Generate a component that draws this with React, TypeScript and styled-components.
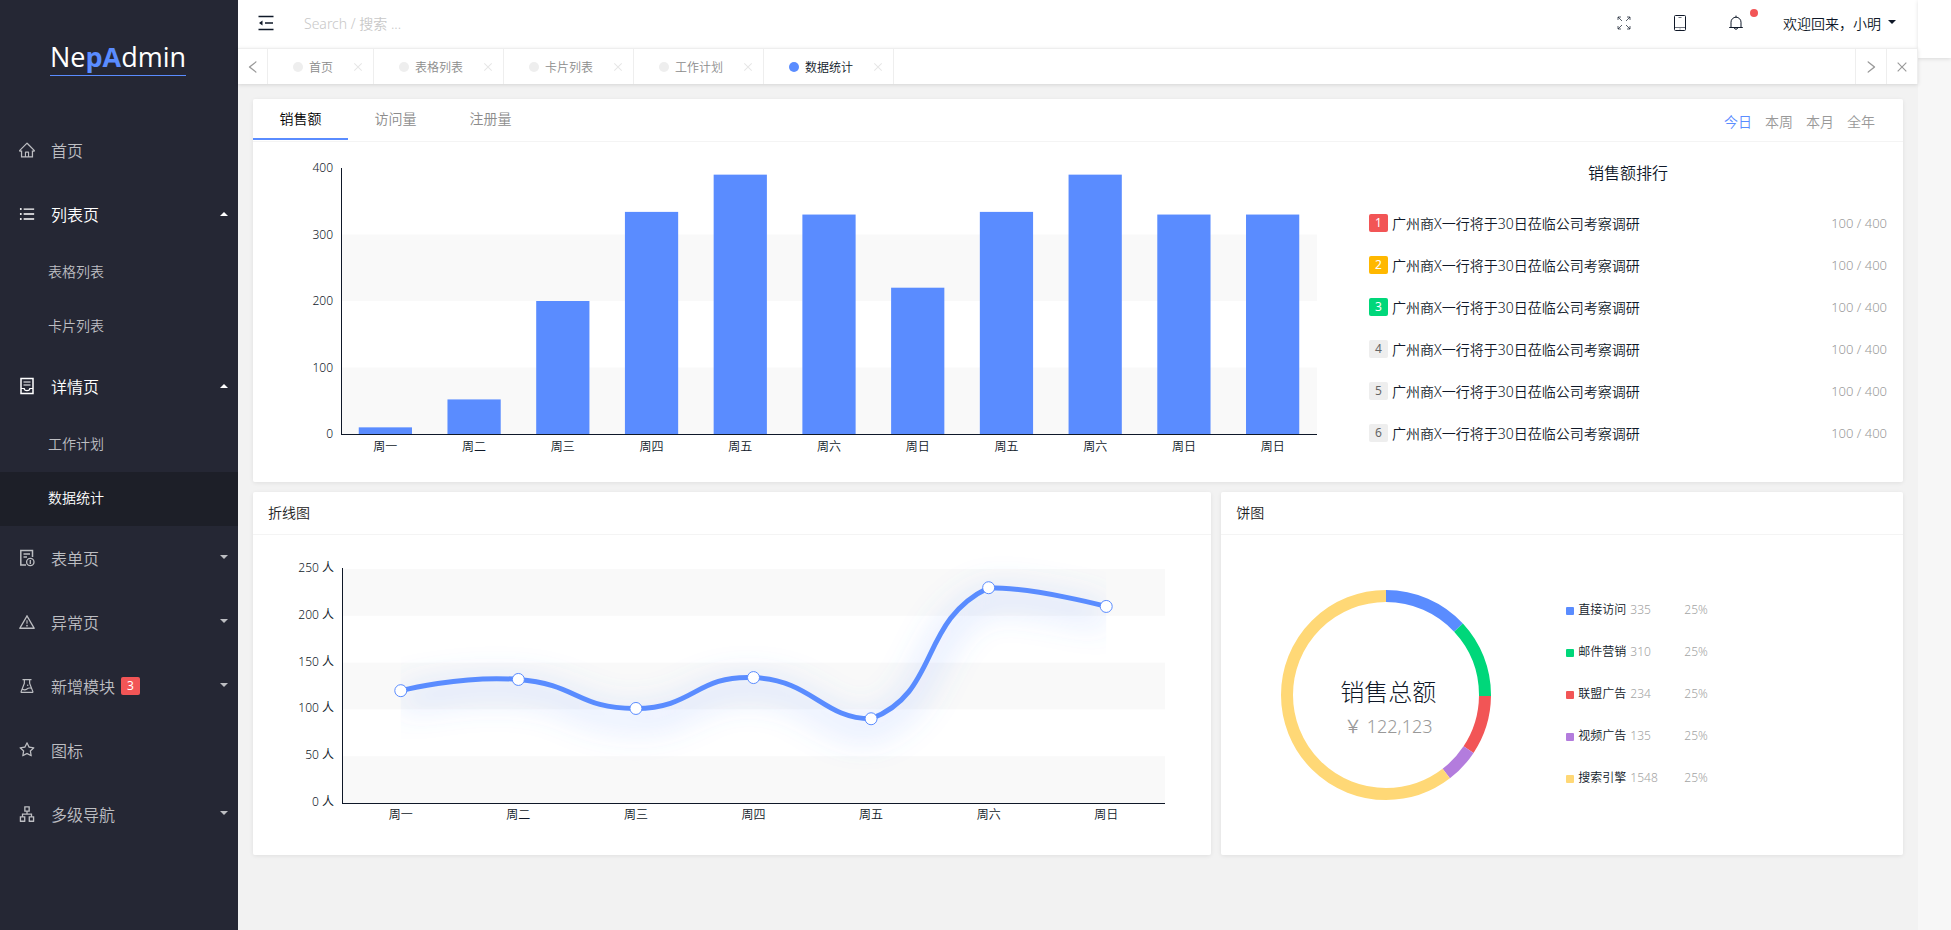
import React, { useId, useLayoutEffect, useRef, useState } from 'react';
import styled, { createGlobalStyle, css } from 'styled-components';
import {
  AiOutlineHome,
  AiOutlineUnorderedList,
  AiOutlineWarning,
  AiOutlineExperiment,
  AiOutlineStar,
  AiOutlineApartment,
  AiOutlineLeft,
  AiOutlineRight,
  AiOutlineClose,
} from 'react-icons/ai';

const ink = '#0f1828';
const blue = '#5a8cff';
const green = '#00d77a';
const red = '#f25556';
const purple = '#b37cdd';
const yellow = '#ffd876';
const muted = '#999999';
const band = '#f9f9f9';
const fontStack = '"Noto Sans", "Noto Sans CJK SC", sans-serif';

const GlobalStyle = createGlobalStyle`
  *, *::before, *::after { box-sizing: border-box; }
  body {
    margin: 0;
    color: ${ink};
    background: #f7f7f7;
    font-family: ${fontStack};
    font-size: 14px;
    font-weight: 350;
  }
  button, input { font: inherit; color: inherit; }
  button { margin: 0; padding: 0; border: 0; background: none; cursor: pointer; }
  a { color: inherit; text-decoration: none; }
  ul, ol { margin: 0; padding: 0; list-style: none; }
  h1, h2, h3, p { margin: 0; font-weight: inherit; }
`;

const Shell = styled.div`
  display: flex;
  min-height: 100vh;
`;

/* Icons */

type IconProps = { size?: number };

function IconBase({ size = 18, children }: IconProps & { children: React.ReactNode }) {
  return (
    <svg width={size} height={size} viewBox="0 0 18 18" fill="none" stroke="currentColor" aria-hidden="true">
      {children}
    </svg>
  );
}

const InboxPageIcon = (props: IconProps) => (
  <IconBase {...props}>
    <path strokeWidth="1.5" d="M3 1.5H15V16.5H3Z" />
    <path strokeWidth="1.2" d="M5.5 5H12.5M5.5 8H12.5M3 11.5H6.2C6.2 14.4 11.8 14.4 11.8 11.5H15" />
  </IconBase>
);

const InfoPageIcon = (props: IconProps) => (
  <IconBase {...props}>
    <path strokeWidth="1.5" d="M14.5 8V1.5H2.8V16H8" />
    <path strokeWidth="1.3" d="M5.5 5H12M5.5 8H9" />
    <circle cx="12.3" cy="13" r="3.7" strokeWidth="1.3" />
    <path strokeWidth="1.3" d="M12.3 11V15" />
  </IconBase>
);

const FoldIcon = (props: IconProps) => (
  <IconBase {...props}>
    <path strokeWidth="1.4" d="M1.5 2.5H16.5M8 9H16M1.5 15.5H16.5" />
    <path fill="currentColor" stroke="none" d="M5.5 6.5V11.5L2 9Z" />
  </IconBase>
);

const ExpandIcon = (props: IconProps) => (
  <IconBase {...props}>
    <path
      strokeWidth="0.7"
      d="M3 6V3H6M3 3L7 7M12 3H15V6M15 3L11 7M15 12V15H12M15 15L11 11M6 15H3V12M3 15L7 11"
    />
  </IconBase>
);

const TabletIcon = (props: IconProps) => (
  <IconBase {...props}>
    <rect x="3.5" y="1.5" width="11" height="15" rx="1" strokeWidth="1" />
    <path strokeWidth="0.6" d="M3.5 13.5H14.5M7.5 3.5H10.5M8.5 15H9.5" />
  </IconBase>
);

const BellIcon = (props: IconProps) => (
  <IconBase {...props}>
    <path strokeWidth="1" d="M2.2 13.5H15.8M4 13.5V8.2A5 5 0 0 1 14 8.2V13.5M7.3 14A1.8 1.8 0 0 0 10.7 14M9 3.2V1.6" />
  </IconBase>
);

/* Sidebar */

const Sidebar = styled.aside`
  flex: 0 0 238px;
  background: #252734;
`;

const LogoArea = styled.div`
  display: flex;
  justify-content: center;
  height: 118px;
  padding: 40px 2px 0 0;
`;

const Logo = styled.a`
  height: 36px;
  border-bottom: 1px solid ${blue};
  color: #ffffff;
  font-family: "Open Sans", sans-serif;
  font-size: 27px;
  font-weight: 400;
  line-height: 34px;

  strong { color: ${blue}; font-weight: 700; }
`;

const MenuButton = styled.button<{ $open?: boolean }>`
  display: flex;
  align-items: center;
  width: 100%;
  height: 64px;
  padding: 0 10px 0 18px;
  color: ${(p) => (p.$open ? '#ffffff' : '#bdbec2')};
  font-size: 16px;
  text-align: left;

  svg { flex: none; }
`;

const MenuText = styled.span`
  margin-left: 15px;
`;

const MenuBadge = styled.span`
  height: 18px;
  margin-left: 6px;
  padding: 0 6px;
  border-radius: 2px;
  background: ${red};
  color: #ffffff;
  font-size: 12px;
  font-weight: 400;
  line-height: 18px;
`;

const Caret = styled.i<{ $up?: boolean }>`
  margin-left: auto;
  border: 4px solid transparent;
  ${(p) =>
    p.$up
      ? css`border-top: 0; border-bottom-color: currentColor;`
      : css`border-bottom: 0; border-top-color: currentColor; margin-bottom: 2px;`}
`;

const SubLink = styled.a<{ $active?: boolean }>`
  display: block;
  padding: 0 0 2px 48px;
  background: ${(p) => (p.$active ? '#1d1f28' : 'transparent')};
  color: ${(p) => (p.$active ? '#ffffff' : '#bdbec2')};
  line-height: 52px;
`;

/* Top bars */

const Main = styled.div`
  flex: 1;
  min-width: 0;
  background: #f2f2f2;
`;

const Gutter = styled.div`
  flex: 0 0 33px;

  &::before {
    content: '';
    display: block;
    height: 58px;
    background: #ffffff;
    box-shadow: 0 1px 4px rgba(0, 0, 0, 0.12);
  }
`;

const Header = styled.header`
  display: flex;
  align-items: center;
  height: 48px;
  padding: 0 22px 2px 19px;
  background: #ffffff;
`;

const HeaderButton = styled.button`
  display: flex;
  position: relative;
`;

const Search = styled.input`
  flex: 1;
  min-width: 0;
  margin-left: 29px;
  padding: 0;
  border: 0;
  outline: 0;
  background: transparent;

  &::placeholder { color: #c8c8c8; opacity: 1; }
`;

const HeaderActions = styled.div`
  display: flex;
  align-items: center;
  gap: 38px;
`;

const Dot = styled.span`
  position: absolute;
  top: -5px;
  right: -13px;
  width: 8px;
  height: 8px;
  border-radius: 50%;
  background: ${red};
`;

const UserButton = styled.button`
  display: flex;
  align-items: center;
  gap: 7px;
`;

const TabBar = styled.nav`
  display: flex;
  position: relative;
  height: 36px;
  border: solid #eeeeee;
  border-width: 1px 1px 0 0;
  background: #ffffff;
  box-shadow: 0 1px 4px rgba(0, 0, 0, 0.12);
`;

const BarButton = styled.button<{ $side: 'left' | 'right' }>`
  display: flex;
  align-items: center;
  justify-content: center;
  width: ${(p) => (p.$side === 'left' ? 30 : 31)}px;
  border-${(p) => (p.$side === 'left' ? 'right' : 'left')}: 1px solid #eeeeee;
  color: ${muted};
`;

const TabList = styled.ul`
  display: flex;
  flex: 1;
`;

const Tab = styled.li<{ $active?: boolean }>`
  display: flex;
  align-items: center;
  padding: 0 9px 0 25px;
  border-right: 1px solid #eeeeee;
  color: ${(p) => (p.$active ? ink : '#8c8c8c')};
  font-size: 12px;

  &::before {
    content: '';
    width: 10px;
    height: 10px;
    margin-right: 6px;
    border-radius: 50%;
    background: ${(p) => (p.$active ? blue : '#eeeeee')};
  }
`;

const TabClose = styled.button`
  display: flex;
  margin-left: 19px;
  color: #e6e6e6;
`;

/* Cards */

const Content = styled.main`
  display: flex;
  flex-direction: column;
  gap: 10px;
  padding: 15px;
`;

const Card = styled.section`
  overflow: hidden;
  height: 100%;
  border-radius: 2px;
  background: #ffffff;
`;

const CardFrame = styled.div`
  border-radius: 2px;
  box-shadow: 0 1px 4px rgba(0, 0, 0, 0.08);
`;

const CardHead = styled.header`
  display: flex;
  align-items: center;
  height: 43px;
  border-bottom: 1px solid #f4f4f4;
`;

const CardTitle = styled.h2`
  padding: 0 0 2px 15px;
  color: #222222;
  font-size: 14px;
`;

const CardTab = styled.button<{ $active?: boolean }>`
  align-self: flex-start;
  width: 95px;
  height: 41px;
  padding-bottom: 2px;
  border-bottom: 2px solid ${(p) => (p.$active ? blue : 'transparent')};
  color: ${(p) => (p.$active ? '#000000' : '#8c8c8c')};
`;

const Ranges = styled.div`
  display: flex;
  gap: 13px;
  margin-left: auto;
  padding: 2px 28px 0 0;
`;

const RangeButton = styled.button<{ $active?: boolean }>`
  color: ${(p) => (p.$active ? blue : muted)};
`;

const SalesBody = styled.div`
  display: grid;
  grid-template-columns: 2fr 1fr;
  height: 340px;
`;

const Columns = styled.div`
  display: flex;
  margin: 0 -5px;
`;

const Column = styled.div<{ $span: number }>`
  flex: 0 0 calc(100% * ${(p) => p.$span} / 12);
  min-width: 0;
  padding: 0 5px;
`;

const ChartBox = styled.div`
  min-width: 0;
  overflow: hidden;

  svg { display: block; }
  text { font-size: 12px; fill: ${ink}; }
`;

const Ranking = styled.div`
  padding: 19px 16px 0;
`;

const RankTitle = styled.h3`
  margin-bottom: 17px;
  font-size: 16px;
  line-height: 24px;
  text-align: center;
`;

const RankRow = styled.li`
  display: flex;
  align-items: center;
  height: 42px;
`;

const RankBadge = styled.span<{ $color?: string }>`
  width: 19px;
  height: 18px;
  margin-right: 4px;
  border-radius: 2px;
  background: ${(p) => p.$color || '#eeeeee'};
  color: ${(p) => (p.$color ? '#ffffff' : '#666666')};
  font-size: 12px;
  font-weight: 400;
  line-height: 18px;
  text-align: center;
`;

const RankValue = styled.span`
  margin-left: auto;
  color: ${muted};
  font-size: 13px;
`;

const PieBody = styled.div`
  display: flex;
  align-items: center;
  gap: 75px;
  height: 320px;
  padding-left: 60px;
`;

const Donut = styled.div`
  display: grid;
  flex: 0 0 210px;
  place-items: center;

  > * { grid-area: 1 / 1; }
`;

const DonutText = styled.div`
  padding: 28px 0 0 4px;
  text-align: center;
`;

const DonutTitle = styled.p`
  font-size: 24px;
  font-weight: 300;
  line-height: 34px;
`;

const DonutValue = styled.p`
  color: ${muted};
  font-size: 18px;
  line-height: 34px;
`;

const Legend = styled.ul`
  margin-bottom: 4px;
`;

const LegendRow = styled.li`
  display: grid;
  grid-template-columns: 12px 52px 54px auto;
  align-items: center;
  height: 42px;
  color: #a4a4a4;
  font-size: 12px;
`;

const Swatch = styled.i<{ $color: string }>`
  width: 8px;
  height: 8px;
  margin-top: 4px;
  border-radius: 1px;
  background: ${(p) => p.$color};
`;

const LegendName = styled.span`
  color: ${ink};
`;

/* Charts */

function useWidth(initial: number) {
  const ref = useRef<HTMLDivElement>(null);
  const [width, setWidth] = useState(initial);
  useLayoutEffect(() => {
    const node = ref.current;
    if (!node) return;
    const measure = () => setWidth(node.clientWidth);
    measure();
    const observer = new ResizeObserver(measure);
    observer.observe(node);
    return () => observer.disconnect();
  }, []);
  return [ref, width] as const;
}

const days = ['周一', '周二', '周三', '周四', '周五', '周六', '周日'];
const barDays = [...days, '周五', '周六', '周日', '周日'];
const barValues = [10, 52, 200, 334, 390, 330, 220, 334, 390, 330, 330];

function BarChart() {
  const [ref, width] = useWidth(1100);
  const left = 88;
  const right = width - 36;
  const top = 26;
  const bottom = 292;
  const step = (right - left) / barValues.length;
  const y = (v: number) => bottom - ((bottom - top) * v) / 400;
  return (
    <ChartBox ref={ref}>
      <svg width={width} height={340} role="img" aria-label="销售额">
        {[300, 100].map((v) => (
          <rect key={v} x={left} y={y(v)} width={right - left} height={y(v - 100) - y(v)} fill={band} />
        ))}
        {barValues.map((v, i) => (
          <rect key={i} x={left + step * (i + 0.2)} y={y(v)} width={step * 0.6} height={bottom - y(v)} fill={blue} />
        ))}
        <path d={`M${left + 0.5} ${top}V${bottom + 0.5}H${right}`} fill="none" stroke={ink} shapeRendering="crispEdges" />
        {[0, 100, 200, 300, 400].map((v) => (
          <text key={v} x={left - 8} y={y(v) + 4} textAnchor="end">{v}</text>
        ))}
        {barDays.map((d, i) => (
          <text key={i} x={left + step * (i + 0.5)} y={bottom + 17} textAnchor="middle">{d}</text>
        ))}
      </svg>
    </ChartBox>
  );
}

type Point = { x: number; y: number };

/* Bezier smoothing whose handles stay inside the bounds of the data. */
function smoothPath(points: Point[]) {
  const xs = points.map((p) => p.x);
  const ys = points.map((p) => p.y);
  const clamp = (p: Point): Point => ({
    x: Math.min(Math.max(p.x, Math.min(...xs)), Math.max(...xs)),
    y: Math.min(Math.max(p.y, Math.min(...ys)), Math.max(...ys)),
  });
  let d = `M${points[0].x} ${points[0].y}`;
  let out = points[0];
  for (let i = 1; i < points.length; i++) {
    const p = points[i];
    const prev = points[i - 1];
    const next = points[i + 1];
    let into = p;
    let nextOut = p;
    if (next) {
      const before = Math.hypot(p.x - prev.x, p.y - prev.y);
      const after = Math.hypot(next.x - p.x, next.y - p.y);
      const ratio = after / (before + after);
      const vx = (next.x - prev.x) * 0.5;
      const vy = (next.y - prev.y) * 0.5;
      into = { x: p.x - vx * (1 - ratio), y: p.y - vy * (1 - ratio) };
      nextOut = { x: p.x + vx * ratio, y: p.y + vy * ratio };
    }
    const a = clamp(out);
    const b = clamp(into);
    d += `C${a.x} ${a.y} ${b.x} ${b.y} ${p.x} ${p.y}`;
    out = nextOut;
  }
  return d;
}

const lineValues = [120, 132, 101, 134, 90, 230, 210];

function LineChart() {
  const [ref, width] = useWidth(958);
  const id = useId();
  const left = 89;
  const right = width - 46;
  const top = 34;
  const bottom = 268;
  const step = (right - left) / lineValues.length;
  const y = (v: number) => bottom - ((bottom - top) * v) / 250;
  const points = lineValues.map((v, i) => ({ x: left + step * (i + 0.5), y: y(v) }));
  const path = smoothPath(points);
  return (
    <ChartBox ref={ref}>
      <svg width={width} height={320} role="img" aria-label="折线图">
        <defs>
          <filter id={`${id}blur`} filterUnits="userSpaceOnUse" x="0" y="0" width={width} height="320">
            <feGaussianBlur stdDeviation="17" />
          </filter>
          <clipPath id={`${id}clip`}>
            <rect x={points[0].x} y="0" width={points[6].x - points[0].x} height="320" />
          </clipPath>
        </defs>
        {[250, 150, 50].map((v) => (
          <rect key={v} x={left} y={y(v)} width={right - left} height={y(v - 50) - y(v)} fill={band} />
        ))}
        <path d={`M${left + 0.5} ${top - 1}V${bottom + 0.5}H${right}`} fill="none" stroke={ink} shapeRendering="crispEdges" />
        <g clipPath={`url(#${id}clip)`}>
          <g filter={`url(#${id}blur)`}>
            <path d={path} transform="translate(0 10)" fill="none" stroke={blue} strokeWidth="4" />
          </g>
        </g>
        <path d={path} fill="none" stroke={blue} strokeWidth="5" />
        {points.map((p, i) => (
          <circle key={i} cx={p.x} cy={p.y} r="6" fill="#ffffff" stroke={blue} />
        ))}
        {[0, 50, 100, 150, 200, 250].map((v) => (
          <text key={v} x={left - 8} y={y(v) + 3} textAnchor="end">{`${v} 人`}</text>
        ))}
        {days.map((d, i) => (
          <text key={d} x={points[i].x} y={bottom + 16} textAnchor="middle">{d}</text>
        ))}
      </svg>
    </ChartBox>
  );
}

const sources = [
  { name: '直接访问', value: 335, color: blue },
  { name: '邮件营销', value: 310, color: green },
  { name: '联盟广告', value: 234, color: red },
  { name: '视频广告', value: 135, color: purple },
  { name: '搜索引擎', value: 1548, color: yellow },
];

function PieRing() {
  const total = sources.reduce((sum, s) => sum + s.value, 0);
  let start = 0;
  return (
    <svg width="210" height="210" viewBox="0 0 210 210" role="img" aria-label="饼图">
      <g transform="rotate(-90 105 105)" fill="none" strokeWidth="12">
        {sources.map((s) => {
          const offset = start;
          start += s.value;
          return (
            <circle
              key={s.name}
              cx="105"
              cy="105"
              r="99"
              pathLength={total}
              stroke={s.color}
              strokeDasharray={`${s.value} ${total - s.value}`}
              strokeDashoffset={-offset}
            />
          );
        })}
      </g>
    </svg>
  );
}

/* Page data */

const menu = [
  { text: '首页', icon: AiOutlineHome },
  { text: '列表页', icon: AiOutlineUnorderedList, open: true, items: ['表格列表', '卡片列表'] },
  { text: '详情页', icon: InboxPageIcon, open: true, items: ['工作计划', '数据统计'] },
  { text: '表单页', icon: InfoPageIcon, group: true },
  { text: '异常页', icon: AiOutlineWarning, group: true },
  { text: '新增模块', icon: AiOutlineExperiment, group: true, badge: 3 },
  { text: '图标', icon: AiOutlineStar },
  { text: '多级导航', icon: AiOutlineApartment, group: true },
];

const openTabs = ['首页', '表格列表', '卡片列表', '工作计划', '数据统计'];
const current = '数据统计';
const rankColors = [red, '#ffb800', green];

export default function App() {
  const [metric, setMetric] = useState('销售额');
  const [range, setRange] = useState('今日');
  return (
    <>
      <GlobalStyle />
      <Shell>
        <Sidebar>
          <LogoArea>
            <Logo href="#">Ne<strong>pA</strong>dmin</Logo>
          </LogoArea>
          <nav>
            <ul>
              {menu.map(({ text, icon: Icon, open, items, group, badge }) => (
                <li key={text}>
                  <MenuButton $open={open} aria-expanded={open}>
                    <Icon size={18} />
                    <MenuText>{text}</MenuText>
                    {badge && <MenuBadge>{badge}</MenuBadge>}
                    {(open || group) && <Caret $up={open} />}
                  </MenuButton>
                  {items && (
                    <ul>
                      {items.map((item) => (
                        <li key={item}>
                          <SubLink href="#" $active={item === current}>{item}</SubLink>
                        </li>
                      ))}
                    </ul>
                  )}
                </li>
              ))}
            </ul>
          </nav>
        </Sidebar>

        <Main>
          <Header>
            <HeaderButton aria-label="收起菜单"><FoldIcon /></HeaderButton>
            <Search type="text" placeholder="Search / 搜索 ..." aria-label="搜索" />
            <HeaderActions>
              <HeaderButton aria-label="全屏"><ExpandIcon /></HeaderButton>
              <HeaderButton aria-label="平板"><TabletIcon /></HeaderButton>
              <HeaderButton aria-label="通知"><BellIcon /><Dot /></HeaderButton>
              <UserButton>欢迎回来，小明<Caret /></UserButton>
            </HeaderActions>
          </Header>
          <TabBar>
            <BarButton $side="left" aria-label="向左"><AiOutlineLeft size={16} /></BarButton>
            <TabList>
              {openTabs.map((tab) => (
                <Tab key={tab} $active={tab === current}>
                  <a href="#">{tab}</a>
                  <TabClose aria-label={`关闭${tab}`}><AiOutlineClose size={12} /></TabClose>
                </Tab>
              ))}
            </TabList>
            <BarButton $side="right" aria-label="向右"><AiOutlineRight size={16} /></BarButton>
            <BarButton $side="right" aria-label="关闭"><AiOutlineClose size={14} /></BarButton>
          </TabBar>

          <Content>
            <CardFrame>
              <Card>
                <CardHead>
                  {['销售额', '访问量', '注册量'].map((name) => (
                    <CardTab key={name} $active={name === metric} onClick={() => setMetric(name)}>{name}</CardTab>
                  ))}
                  <Ranges>
                    {['今日', '本周', '本月', '全年'].map((name) => (
                      <RangeButton key={name} $active={name === range} onClick={() => setRange(name)}>{name}</RangeButton>
                    ))}
                  </Ranges>
                </CardHead>
                <SalesBody>
                  <BarChart />
                  <Ranking>
                    <RankTitle>销售额排行</RankTitle>
                    <ol>
                      {[1, 2, 3, 4, 5, 6].map((n) => (
                        <RankRow key={n}>
                          <RankBadge $color={rankColors[n - 1]}>{n}</RankBadge>
                          <a href="#">广州商X一行将于30日莅临公司考察调研</a>
                          <RankValue>100 / 400</RankValue>
                        </RankRow>
                      ))}
                    </ol>
                  </Ranking>
                </SalesBody>
              </Card>
            </CardFrame>

            <Columns>
              <Column $span={7}>
                <CardFrame>
                  <Card>
                    <CardHead><CardTitle>折线图</CardTitle></CardHead>
                    <LineChart />
                  </Card>
                </CardFrame>
              </Column>
              <Column $span={5}>
                <CardFrame>
                  <Card>
                    <CardHead><CardTitle>饼图</CardTitle></CardHead>
                    <PieBody>
                      <Donut>
                        <PieRing />
                        <DonutText>
                          <DonutTitle>销售总额</DonutTitle>
                          <DonutValue>￥ 122,123</DonutValue>
                        </DonutText>
                      </Donut>
                      <Legend>
                        {sources.map((s) => (
                          <LegendRow key={s.name}>
                            <Swatch $color={s.color} />
                            <LegendName>{s.name}</LegendName>
                            <span>{s.value}</span>
                            <span>25%</span>
                          </LegendRow>
                        ))}
                      </Legend>
                    </PieBody>
                  </Card>
                </CardFrame>
              </Column>
            </Columns>
          </Content>
        </Main>
        <Gutter />
      </Shell>
    </>
  );
}
